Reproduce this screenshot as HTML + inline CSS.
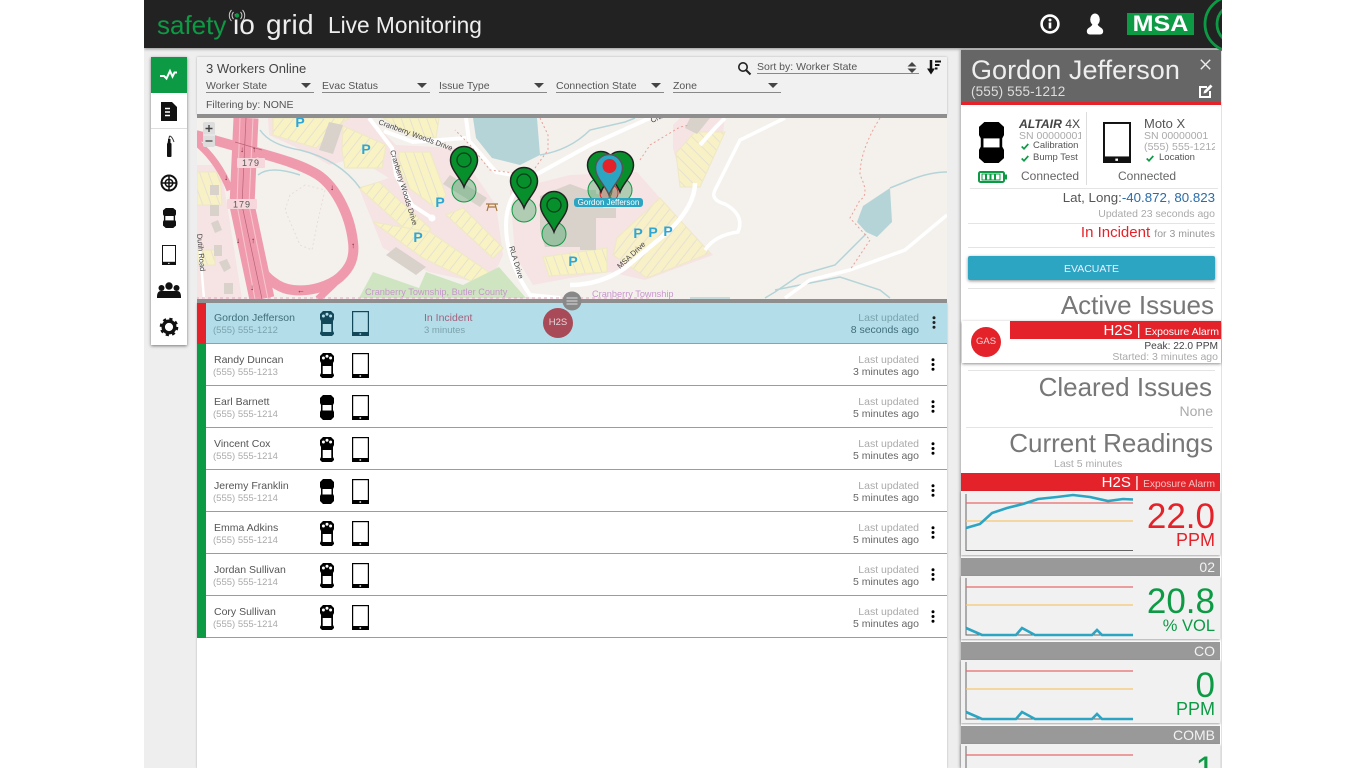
<!DOCTYPE html>
<html><head><meta charset="utf-8"><title>Live Monitoring</title>
<style>
html,body{margin:0;padding:0;width:1366px;height:768px;overflow:hidden;background:#fff;font-family:"Liberation Sans",sans-serif;color:#555}
#app{position:absolute;left:144px;top:0;width:1078px;height:768px;overflow:hidden;background:#eee}
#stage{position:absolute;left:-144px;top:0;width:1366px;height:768px}
.t{position:absolute;white-space:nowrap;line-height:14px;height:14px}
.r{text-align:right}
.b{position:absolute}
svg{position:absolute;overflow:visible}
.row{position:absolute;left:197px;width:750px;height:42px;background:#fff;box-sizing:border-box;border-bottom:1px solid #9c9c9c;--w:#fff;color:#000}
.row .st{position:absolute;left:0;top:0;width:9px;height:42px;background:#0d9a45}
.row .n{left:17px;top:9px;font-size:10.5px;color:#555}
.row .p{left:16px;top:22px;font-size:9.5px;color:#aaa}
.row .l1{right:28px;top:9px;font-size:10.5px;color:#aaa;text-align:right}
.row .l2{right:28px;top:21px;font-size:10.5px;color:#666;text-align:right}
.row .d1{left:123px;top:9px;width:14px;height:25px}
.row .d2{left:155px;top:9px;width:17px;height:25px}
.row .k{left:734px;top:14px;width:4px;height:13px}
.sel{position:absolute;top:79px;width:108px;height:13px;border-bottom:1.5px solid #888;font-size:10.5px;line-height:15px;color:#555}
.sel i{position:absolute;right:3px;top:4px;width:0;height:0;border-left:5px solid transparent;border-right:5px solid transparent;border-top:5px solid #444}
.h{position:absolute;left:961px;width:259px;height:18px;background:#999;color:#f2f2f2;font-size:14px;line-height:18px;text-align:right;box-sizing:border-box;padding-right:5px}
.cb{position:absolute;left:961px;width:259px;height:64px;background:#f1f1f1;box-shadow:0 1px 2px rgba(0,0,0,.35)}
.val{position:absolute;right:5px;text-align:right;white-space:nowrap;font-size:35px;line-height:35px}
.un{position:absolute;right:5px;text-align:right;white-space:nowrap;font-size:18px;line-height:18px}
.hr{position:absolute;height:1px;background:#e4e4e4}
</style></head><body>
<svg width="0" height="0" style="position:absolute">
<defs>
<symbol id="dev1" viewBox="0 0 14 25" preserveAspectRatio="none"><path fill="currentColor" d="M3 0H11L14 3V8L13 10V20L14 22V23L12 25H2L0 23V22L1 20V10L0 8V3Z"/><rect x="2.7" y="13" width="8.6" height="8" style="fill:var(--w)"/><circle cx="3.4" cy="5" r="1.5" style="fill:var(--w)"/><circle cx="7" cy="3.2" r="1.5" style="fill:var(--w)"/><circle cx="10.6" cy="5" r="1.5" style="fill:var(--w)"/></symbol>
<symbol id="dev2" viewBox="0 0 14 25" preserveAspectRatio="none"><path fill="currentColor" d="M3 0H11L14 3V8L13 10V15L14 17V22L11 25H3L0 22V17L1 15V10L0 8V3Z"/><rect x="2.5" y="10" width="9" height="5.5" style="fill:var(--w)"/></symbol>
<symbol id="tab" viewBox="0 0 17 25" preserveAspectRatio="none"><rect x=".6" y=".6" width="15.8" height="23.8" fill="none" stroke="currentColor" stroke-width="1.2"/><rect x="0" y="21" width="17" height="4" fill="currentColor"/><rect x="7.5" y="22.3" width="1.6" height="1.4" style="fill:var(--w)"/></symbol>
<symbol id="dots" viewBox="0 0 4 13"><circle cx="2" cy="1.8" r="1.5" fill="currentColor"/><circle cx="2" cy="6.5" r="1.5" fill="currentColor"/><circle cx="2" cy="11.2" r="1.5" fill="currentColor"/></symbol>
<pattern id="pk1" width="8" height="8" patternUnits="userSpaceOnUse" patternTransform="rotate(38)"><rect width="8" height="8" fill="#f9f3c3"/><rect width="1" height="8" fill="#e5e1d2"/></pattern>
<pattern id="pk2" width="8" height="8" patternUnits="userSpaceOnUse" patternTransform="rotate(-20)"><rect width="8" height="8" fill="#f9f3c3"/><rect width="1" height="8" fill="#e5e1d2"/></pattern>
<pattern id="pk3" width="8" height="8" patternUnits="userSpaceOnUse" patternTransform="rotate(-45)"><rect width="8" height="8" fill="#f9f3c3"/><rect width="1" height="8" fill="#e5e1d2"/></pattern>
<path id="pin" d="M0 0C-3-9-13.5-17-13.5-27A13.5 13.5 0 1 1 13.5-27C13.5-17 3-9 0 0Z"/>
</defs></svg>
<div id="app"><div id="stage">

<!-- top bar -->
<div class="b" style="left:144px;top:0;width:1078px;height:48px;background:#222;box-shadow:0 1px 3px rgba(0,0,0,.4)"></div>
<div class="t" style="left:157px;top:10px;height:30px;line-height:30px;font-size:26px;color:#0d9a45">safety</div>
<div class="t" style="left:233px;top:10px;height:30px;line-height:30px;font-size:28px;color:#eee">io</div>
<svg style="left:229px;top:9px" width="16" height="14"><circle cx="8" cy="6.500" r="2.200" fill="#0d9a45"/><path d="M4.500 3a5 5 0 0 0 0 7M11.500 3a5 5 0 0 1 0 7M2.500 1a8 8 0 0 0 0 11M13.500 1a8 8 0 0 1 0 11" fill="none" stroke="#ccc" stroke-width="1"/></svg>
<div class="t" style="left:266px;top:10px;height:30px;line-height:30px;font-size:28px;color:#eee;letter-spacing:.3px">grid</div>
<div class="t" style="left:328px;top:10px;height:30px;line-height:30px;font-size:22.7px;color:#eee">Live Monitoring</div>
<svg style="left:1040px;top:14px" width="20" height="20"><circle cx="10" cy="10" r="8.400" fill="none" stroke="#fff" stroke-width="2.600"/><rect x="8.700" y="8.500" width="2.600" height="6" fill="#fff"/><circle cx="10" cy="6" r="1.500" fill="#fff"/></svg>
<svg style="left:1086px;top:13px" width="18" height="22"><ellipse cx="9" cy="6.500" rx="4.800" ry="6" fill="#fff"/><path d="M6.500 11C6 14 1 14.500 .8 18Q.8 21.500 4 21.500H14Q17.200 21.500 17.200 18C17 14.500 12 14 11.500 11Z" fill="#fff"/></svg>
<div class="b" style="left:1127px;top:13px;width:67px;height:22px;background:#0d9a45"></div>
<div class="t" style="left:1127px;top:13px;width:67px;height:22px;line-height:22px;font-size:22px;font-weight:bold;color:#fff;text-align:center;transform:scaleX(1.14)">MSA</div>
<svg style="left:1200px;top:0" width="22" height="48"><g fill="none" stroke="#0d9a45" stroke-width="2.800"><circle cx="32.600" cy="24" r="27.600"/><circle cx="37" cy="24" r="20"/></g></svg>

<!-- left nav -->
<div class="b" style="left:151px;top:57px;width:36px;height:288px;background:#fff;box-shadow:0 1px 3px rgba(0,0,0,.5)"></div>
<div class="b" style="left:151px;top:57px;width:36px;height:36px;background:#0d9a45"></div>
<div class="b" style="left:151px;top:128px;width:36px;height:1px;background:#ddd"></div>
<svg style="left:151px;top:57px" width="36" height="288" viewBox="151 57 36 288">
<path d="M160 76H164L166.500 78.500L170 71L172.500 76.500L174.500 72.500H177" fill="none" stroke="#fff" stroke-width="2"/>
<path d="M161 102H172L177 107V121H161Z" fill="#111"/><path d="M165 108.500h5M165 112h5M165 115.500h5" stroke="#fff" stroke-width="1.600"/>
<rect x="167" y="143" width="4.500" height="14" rx="1" fill="#111"/><path d="M168 143L169.500 136M169.500 136Q172 136 174 142" fill="none" stroke="#333" stroke-width="1"/><rect x="168" y="139" width="2.500" height="4" fill="#111"/>
<circle cx="169" cy="183" r="7.500" fill="none" stroke="#111" stroke-width="2"/><circle cx="169" cy="183" r="3.800" fill="none" stroke="#111" stroke-width="1.500"/><path d="M169 175.500V190.500M161.500 183H176.500" stroke="#111" stroke-width="1.500"/>
<use href="#dev2" x="163" y="208" width="13" height="20" style="--w:#fff;color:#111"/>
<g style="--w:#fff;color:#111"><use href="#tab" x="162" y="245" width="14" height="20"/></g>
<g fill="#111"><circle cx="169" cy="286" r="3.700"/><circle cx="161.500" cy="288" r="3"/><circle cx="176.500" cy="288" r="3"/><path d="M157 297Q157 291 161 291H177Q181 291 181 297V298H157Z"/></g>
<circle cx="169" cy="327" r="5.800" fill="none" stroke="#111" stroke-width="3.400"/><circle cx="169" cy="327" r="8" fill="none" stroke="#111" stroke-width="2.600" stroke-dasharray="3.100 3.200"/>
</svg>

<!-- filter panel -->
<div class="b" style="left:197px;top:57px;width:750px;height:58px;background:#f1f1f1;box-shadow:0 0 2px rgba(0,0,0,.25)"></div>
<div class="t" style="left:206px;top:62px;font-size:13px;color:#444">3 Workers Online</div>
<div class="sel" style="left:206px">Worker State<i></i></div>
<div class="sel" style="left:322px">Evac Status<i></i></div>
<div class="sel" style="left:439px">Issue Type<i></i></div>
<div class="sel" style="left:556px">Connection State<i></i></div>
<div class="sel" style="left:673px">Zone<i></i></div>
<div class="t" style="left:206px;top:98px;font-size:10.5px;color:#555;line-height:15px">Filtering by: NONE</div>
<svg style="left:737px;top:61px" width="15" height="15"><circle cx="6" cy="6" r="4.200" fill="none" stroke="#222" stroke-width="1.600"/><path d="M9 9L13.500 13.500" stroke="#222" stroke-width="2"/></svg>
<div class="sel" style="left:757px;top:60px;width:162px;">Sort by: Worker State</div>
<svg style="left:906px;top:62px" width="12" height="11"><path d="M6 0L10.500 4.500H1.500ZM6 11L10.500 6.500H1.500Z" fill="#444"/></svg>
<svg style="left:927px;top:60px" width="14" height="15"><path d="M4 0V9" stroke="#111" stroke-width="2.500"/><path d="M0 8.500H8L4 14.500Z" fill="#111"/><path d="M8 1.500H14M8 5H12.500M8 8.500H10.500" stroke="#111" stroke-width="2"/></svg>

<!-- map -->
<div class="b" style="left:197px;top:114px;width:750px;height:189px;background:#8e8e8e"></div>
<svg style="left:197px;top:118px" width="750" height="181" viewBox="197 118 750 181">
<defs><clipPath id="mc"><rect x="197" y="118" width="750" height="181"/></clipPath></defs>
<g clip-path="url(#mc)">
<rect x="197" y="118" width="750" height="181" fill="#f4f1ed"/>
<g fill="#f6e3e3">
<path d="M196 165L220 165L226 198L242 299H196Z"/>
<path d="M268 118H369L396 145L456 148L496 205L503 255L489 285L429 272L383 248L359 188L389 178L356 158L329 165L313 155L269 135Z"/>
<path d="M510 190L570 175L637 172L660 198L713 255L645 280L610 272L570 278L533 285L515 255Z"/>
<path d="M673 125L723 132L700 187L683 187L673 148ZM680 118H725L723 132L673 125Z"/>
</g>
<g stroke="#efe9c6" stroke-width="1.200">
<path fill="url(#pk1)" d="M273 118H349L343 122L316 148L273 135Z"/>
<path fill="url(#pk1)" d="M343 126L386 145L382 168L345 168L342 150Z"/>
<path fill="url(#pk2)" d="M383 118H439L436 138L410 135Z"/>
<path fill="url(#pk2)" d="M399 152H430L446 195L436 208L409 188L399 168Z"/>
<path fill="url(#pk1)" d="M359 188L379 182L430 228V245L415 238Z"/>
<path fill="url(#pk1)" d="M373 222L430 232L493 275L479 285L423 258Z"/>
<path fill="url(#pk1)" d="M446 215L463 208L503 248L493 258Z"/>
<path fill="url(#pk2)" d="M543 257L607 248V272L549 276Z"/>
<path fill="url(#pk1)" d="M617 238L660 198L710 253L647 278L613 255Z" style="opacity:.85"/>
<path fill="url(#pk3)" d="M676 153L695 132L725 132L700 187H680Z" style="opacity:.9"/>
<path fill="url(#pk2)" d="M197 172H220L222 205H197ZM197 250H215V265H197Z" style="opacity:.9"/>
</g>
<g fill="#cfe5c2"><path d="M359 298L373 272L419 288L426 272L463 285L499 267L526 298Z"/></g>
<g fill="#d9d2cb">
<path d="M319 150L329 122L343 125L333 154Z"/>
<path d="M443 184L450 175L487 198L480 207Z"/>
<path d="M386 255L396 247L426 267L416 275Z"/>
<path d="M540 196L570 184L600 195L606 218H596L596 250H580V247L545 247L540 230Z"/>
<path d="M570 190H596V230H570ZM598 208L616 208V218H598Z"/>
<path d="M690 118H710L697 134L685 128Z"/>
<path d="M210 185h9v10h-9zM210 205h9v11h-9zM211 223l7-3 4 10-7 3zM214 245h8v11h-8zM219 262l8-3 4 9-7 4zM224 283h9v11h-9z"/>
</g>
<g fill="#b5d4d8">
<path d="M473 118H537L540 155L520 165L492 158L476 138Z"/>
<path d="M890 188L863 206L857 222L866 232L877 237L892 222Z"/>
</g>
<g fill="none" stroke="#b5d4d8" stroke-width="1.500">
<path d="M260 130Q270 145 300 150Q340 160 360 188"/>
<path d="M258 175Q270 165 300 175"/>
<path d="M540 155Q570 150 590 130L625 122L635 118"/>
<path d="M890 188L910 180Q930 172 947 172"/>
<path d="M866 234L835 265L800 275L775 292L765 298"/>
<path d="M775 290L840 277L880 290L890 298"/>
<path d="M690 298H730"/>
</g>
<g fill="none" stroke="#fff">
<path d="M369 118L392 148L396 175L412 205L432 218" stroke-width="4"/>
<path d="M384 131L413 142L466 138" stroke-width="4"/>
<path d="M466 118L469 141L496 172L530 178L590 145L650 118" stroke-width="4"/>
<path d="M530 176Q506 195 506 225Q506 260 530 295L560 298" stroke-width="4"/>
<path d="M570 285Q600 285 625 268L670 230Q695 205 695 183" stroke-width="4.500"/>
<path d="M725 118L715 128L700 145" stroke-width="4"/>
<path d="M785 118L740 140L715 190Q710 200 725 204Q745 215 738 232Q715 235 705 250" stroke-width="3.500"/>
<path d="M947 215L905 250L850 270L830 275L810 280L785 298" stroke-width="3.500"/>
<path d="M200 250L204 299" stroke-width="2.500"/>
</g>
<circle cx="432" cy="218" r="3.500" fill="#fff"/>
<g fill="none" stroke="#f09bad" stroke-linecap="butt">
<path d="M246 118L242 205L262 299" stroke-width="25"/>
<path d="M196 135L256 152C285 160 300 165 313 172C335 183 350 215 353 242C355 258 350 268 340 277C330 286 310 292 293 290C280 289 262 278 256 258" stroke-width="10"/>
<path d="M196 142Q218 160 230 190" stroke-width="7"/>
<path d="M318 299L335 283" stroke-width="7"/>
</g>
<g fill="none" stroke="#f7c6cf" stroke-width="1"><path d="M240 118L237 205L255 299M253 118L249 205L268 299"/></g>
<g fill="none" stroke="#b8637a" stroke-width=".7"><path d="M246 118L242 205L262 299"/><path d="M235 142L262 150"/></g>
<path d="M196 298H650" stroke="#e4a6c4" stroke-width="1" stroke-dasharray="3 3" fill="none"/>
<g fill="none" stroke="#e9a096" stroke-width="1" stroke-dasharray="2 2.500">
<path d="M540 118L548 135L548 150L530 175L490 170L470 145L455 130"/>
<path d="M640 160L650 145L680 127L690 125"/>
<path d="M880 118Q860 150 860 175Q870 195 860 200L850 218L870 240L850 270"/>
</g>
<path d="M305 185L290 195L285 210L300 245L312 250L318 220L325 190Z" fill="none" stroke="#e6ddd5" stroke-width="1" stroke-dasharray="2 2.500"/>
<g fill="#7a2438" font-size="8" font-family="Liberation Sans"><text x="240" y="152">↓</text><text x="252" y="152">↑</text><text x="224" y="180">↓</text><text x="236" y="243">↓</text><text x="251" y="243">↑</text><text x="351" y="248">↑</text><text x="330" y="190">↓</text><text x="250" y="290">↓</text><text x="297" y="293">←</text></g>
<g font-family="Liberation Sans"><rect x="237" y="158" width="28" height="10" rx="1" fill="#f6d7db"/><text x="251" y="166" font-size="9" fill="#555" text-anchor="middle" letter-spacing="1">179</text><rect x="227" y="199" width="30" height="10" rx="1" fill="#f6d7db"/><text x="242" y="207.500" font-size="9" fill="#555" text-anchor="middle" letter-spacing="1">179</text></g>
<g font-size="7.500" fill="#444" font-family="Liberation Sans">
<text transform="translate(378 124) rotate(20)">Cranberry Woods Drive</text>
<text transform="translate(390 151) rotate(73)">Cranberry Woods Drive</text>
<text transform="translate(509 247) rotate(73)">RLA Drive</text>
<text transform="translate(620 269) rotate(-43)">MSA Drive</text>
<text transform="translate(652 123) rotate(-25)">Cra</text>
<text transform="translate(197 234) rotate(85)">Dutih Road</text>
</g>
<g fill="#2ea6d6" font-size="14" font-weight="bold" font-family="Liberation Sans" text-anchor="middle">
<text x="300" y="127">P</text><text x="366" y="154">P</text><text x="440" y="207">P</text><text x="418" y="242">P</text><text x="573" y="266">P</text><text x="638" y="238">P</text><text x="653" y="237">P</text><text x="668" y="236">P</text>
</g>
<path d="M486 204H498M488 207H496M489 204L487 211M495 204L497 211" stroke="#a9793c" stroke-width="1.200" fill="none"/>
<g font-size="9.2" fill="#c796cc" font-family="Liberation Sans"><text x="365" y="295">Cranberry Township, Butler County</text><text x="592" y="297">Cranberry Township</text></g>

<g fill="#0d9a45" fill-opacity=".3" stroke="#0d9a45" stroke-width="1">
<circle cx="464" cy="190" r="12"/><circle cx="524" cy="210" r="12"/><circle cx="554" cy="234" r="12"/><circle cx="600" cy="190" r="12"/><circle cx="620" cy="190" r="12"/>
</g>
<circle cx="609" cy="193" r="9" fill="#e4222a" fill-opacity=".25" stroke="#e4222a"/>
<g fill="#078f2c" stroke="#222" stroke-width="1.500">
<use href="#pin" x="464" y="187"/><use href="#pin" x="524" y="208"/><use href="#pin" x="554" y="232"/><use href="#pin" x="601" y="192"/><use href="#pin" x="620" y="192"/>
</g>
<g fill="none" stroke="#063f1c" stroke-width="1.300"><circle cx="464" cy="160" r="7"/><circle cx="524" cy="181" r="7"/><circle cx="554" cy="205" r="7"/></g>
<use href="#pin" x="609" y="195" fill="#2ca5c3" stroke="#555" stroke-width="1.500"/>
<circle cx="609.500" cy="166" r="7" fill="#e4222a"/>
<rect x="574" y="198" width="69" height="9" rx="3" fill="#2ca5c3"/>
<text x="608.500" y="205" font-size="8" fill="#fff" text-anchor="middle" font-family="Liberation Sans">Gordon Jefferson</text>
<rect x="203" y="122" width="12" height="25" rx="2" fill="#ddd"/>
<path d="M205.500 128.500H212.500M209 125V132" stroke="#444" stroke-width="1.400"/><path d="M205.500 141H212.500" stroke="#555" stroke-width="1.400"/><path d="M203 135H215" stroke="#eee" stroke-width="1"/>
</g>
</svg>

<!-- list bg -->
<div class="b" style="left:197px;top:303px;width:750px;height:465px;background:#fff;box-shadow:0 0 2px rgba(0,0,0,.25)"></div>

<div class="row" style="top:302px;background:#b3dde8;--w:#b3dde8;color:#12485a"><div class="st" style="background:#e4222a"></div>
<div class="t n" style="color:#3f6d7a">Gordon Jefferson</div><div class="t p" style="color:#7ba3ae">(555) 555-1212</div>
<svg class="d1"><use href="#dev1" width="14" height="25"/></svg><svg class="d2"><use href="#tab" width="17" height="25"/></svg>
<div class="t" style="left:227px;top:9px;font-size:10.5px;color:#a5607c">In Incident</div><div class="t" style="left:227px;top:22px;font-size:9.5px;color:#7ba3ae">3 minutes</div>
<div class="b" style="left:346px;top:6px;width:30px;height:30px;border-radius:50%;background:#a84a58;color:#e5d8da;font-size:9.5px;line-height:30px;text-align:center">H2S</div>
<div class="t l1" style="color:#7ba3ae">Last updated</div><div class="t l2" style="color:#3f6d7a">8 seconds ago</div><svg class="k" style="left:735px;color:#222"><use href="#dots" width="4" height="13"/></svg></div>

<div class="row" style="top:344px"><div class="st"></div><div class="t n">Randy Duncan</div><div class="t p">(555) 555-1213</div><svg class="d1"><use href="#dev1" width="14" height="25"/></svg><svg class="d2"><use href="#tab" width="17" height="25"/></svg><div class="t l1">Last updated</div><div class="t l2">3 minutes ago</div><svg class="k"><use href="#dots" width="4" height="13"/></svg></div>
<div class="row" style="top:386px"><div class="st"></div><div class="t n">Earl Barnett</div><div class="t p">(555) 555-1214</div><svg class="d1"><use href="#dev2" width="14" height="25"/></svg><svg class="d2"><use href="#tab" width="17" height="25"/></svg><div class="t l1">Last updated</div><div class="t l2">5 minutes ago</div><svg class="k"><use href="#dots" width="4" height="13"/></svg></div>
<div class="row" style="top:428px"><div class="st"></div><div class="t n">Vincent Cox</div><div class="t p">(555) 555-1214</div><svg class="d1"><use href="#dev1" width="14" height="25"/></svg><svg class="d2"><use href="#tab" width="17" height="25"/></svg><div class="t l1">Last updated</div><div class="t l2">5 minutes ago</div><svg class="k"><use href="#dots" width="4" height="13"/></svg></div>
<div class="row" style="top:470px"><div class="st"></div><div class="t n">Jeremy Franklin</div><div class="t p">(555) 555-1214</div><svg class="d1"><use href="#dev2" width="14" height="25"/></svg><svg class="d2"><use href="#tab" width="17" height="25"/></svg><div class="t l1">Last updated</div><div class="t l2">5 minutes ago</div><svg class="k"><use href="#dots" width="4" height="13"/></svg></div>
<div class="row" style="top:512px"><div class="st"></div><div class="t n">Emma Adkins</div><div class="t p">(555) 555-1214</div><svg class="d1"><use href="#dev1" width="14" height="25"/></svg><svg class="d2"><use href="#tab" width="17" height="25"/></svg><div class="t l1">Last updated</div><div class="t l2">5 minutes ago</div><svg class="k"><use href="#dots" width="4" height="13"/></svg></div>
<div class="row" style="top:554px"><div class="st"></div><div class="t n">Jordan Sullivan</div><div class="t p">(555) 555-1214</div><svg class="d1"><use href="#dev1" width="14" height="25"/></svg><svg class="d2"><use href="#tab" width="17" height="25"/></svg><div class="t l1">Last updated</div><div class="t l2">5 minutes ago</div><svg class="k"><use href="#dots" width="4" height="13"/></svg></div>
<div class="row" style="top:596px"><div class="st"></div><div class="t n">Cory Sullivan</div><div class="t p">(555) 555-1214</div><svg class="d1"><use href="#dev1" width="14" height="25"/></svg><svg class="d2"><use href="#tab" width="17" height="25"/></svg><div class="t l1">Last updated</div><div class="t l2">5 minutes ago</div><svg class="k"><use href="#dots" width="4" height="13"/></svg></div>

<!-- gray band + handle over rows -->
<div class="b" style="left:197px;top:299px;width:750px;height:4px;background:#8e8e8e"></div>
<svg style="left:562px;top:291px" width="20" height="20"><circle cx="10" cy="10" r="9.500" fill="#888"/><path d="M4.500 7H15.500M4.500 10H15.500M4.500 13H15.500" stroke="#ddd" stroke-width="1"/></svg>

<!-- right panel -->
<div class="b" style="left:961px;top:50px;width:260px;height:718px;background:#fff;box-shadow:-1px 0 3px rgba(0,0,0,.3)"></div>
<div class="b" style="left:961px;top:50px;width:260px;height:52px;background:#666"></div>
<div class="b" style="left:961px;top:102px;width:260px;height:3px;background:#e4222a"></div>
<div class="t" style="left:971px;top:53px;height:34px;line-height:34px;font-size:27px;color:#eee;letter-spacing:.05px">Gordon Jefferson</div>
<div class="t" style="left:971px;top:85px;font-size:13.5px;color:#ddd;letter-spacing:.15px">(555) 555-1212</div>
<svg style="left:1200px;top:59px" width="11" height="11"><path d="M.8.800L10.200 10.200M10.200.800L.8 10.200" stroke="#eee" stroke-width="1.400"/></svg>
<svg style="left:1198px;top:83px" width="16" height="16"><path d="M9 4H2V14H12V8" fill="none" stroke="#fff" stroke-width="2"/><path d="M5.500 10.500L6 8L12.500 1.500L14.500 3.500L8 10Z" fill="#fff"/></svg>

<svg style="left:979px;top:122px;--w:#fff;color:#000" width="25" height="41"><use href="#dev2" width="25" height="41"/></svg>
<svg style="left:978px;top:171px" width="29" height="12"><rect x="1" y="1" width="25" height="10" rx="1.500" fill="#fff" stroke="#0d9a45" stroke-width="2"/><rect x="27" y="3.500" width="2" height="5" fill="#0d9a45"/><path d="M4 3v6h3.500V3zM8.500 3v6H12V3zM13 3v6h3.500V3zM17.500 3v6H22V3z" fill="#fff" stroke="#0d9a45" stroke-width="1"/></svg>
<div class="t" style="left:1019px;top:117px;font-size:12.2px;color:#444"><b><i>ALTAIR</i></b> 4X</div>
<div class="b" style="left:1019px;top:129px;width:62px;height:14px;overflow:hidden"><div class="t" style="left:0;top:0;font-size:10.5px;color:#aaa">SN 00000001</div></div>
<svg style="left:1021px;top:143px" width="8" height="7"><path d="M.7 3.500L3 5.800L7.300 1" fill="none" stroke="#0d9a45" stroke-width="1.700"/></svg>
<div class="t" style="left:1033px;top:139px;font-size:9.5px;color:#555">Calibration</div>
<svg style="left:1021px;top:155px" width="8" height="7"><path d="M.7 3.500L3 5.800L7.300 1" fill="none" stroke="#0d9a45" stroke-width="1.700"/></svg>
<div class="t" style="left:1033px;top:151px;font-size:9.5px;color:#555">Bump Test</div>
<div class="t" style="left:1021px;top:169px;font-size:12px;color:#666">Connected</div>
<div class="b" style="left:1086px;top:112px;width:1px;height:73px;background:#ddd"></div>
<svg style="left:1103px;top:122px;--w:#fff;color:#111" width="28" height="41"><use href="#tab" width="28" height="41"/></svg>
<div class="t" style="left:1144px;top:117px;font-size:13px;color:#555">Moto X</div>
<div class="t" style="left:1144px;top:129px;font-size:10.5px;color:#aaa">SN 00000001</div>
<div class="b" style="left:1144px;top:140px;width:71px;height:14px;overflow:hidden"><div class="t" style="left:0;top:0;font-size:10.5px;color:#aaa;letter-spacing:.1px">(555) 555-1212</div></div>
<svg style="left:1146px;top:155px" width="8" height="7"><path d="M.7 3.500L3 5.800L7.300 1" fill="none" stroke="#0d9a45" stroke-width="1.700"/></svg>
<div class="t" style="left:1159px;top:151px;font-size:9.5px;color:#555">Location</div>
<div class="t" style="left:1118px;top:169px;font-size:12px;color:#666">Connected</div>
<div class="hr" style="left:970px;top:188px;width:248px"></div>
<div class="t r" style="right:151px;top:191px;font-size:13.3px;color:#555">Lat, Long:<span style="color:#2b6ca8">-40.872, 80.823</span></div>
<div class="t r" style="right:151px;top:207px;font-size:10.5px;color:#aaa">Updated 23 seconds ago</div>
<div class="hr" style="left:968px;top:223px;width:247px"></div>
<div class="t r" style="right:151px;top:226px;font-size:15px;color:#e4222a">In Incident <span style="font-size:10.5px;color:#999">for 3 minutes</span></div>
<div class="hr" style="left:968px;top:247px;width:247px"></div>
<div class="b" style="left:968px;top:256px;width:247px;height:24px;background:#2ca5c3;border-radius:2px;box-shadow:0 1px 3px rgba(0,0,0,.45);color:#eef;font-size:10.5px;line-height:26px;text-align:center">EVACUATE</div>
<div class="hr" style="left:968px;top:288px;width:247px"></div>
<div class="t r" style="right:152px;top:288px;height:34px;line-height:34px;font-size:26px;color:#777">Active Issues</div>
<div class="b" style="left:962px;top:321px;width:259px;height:42px;background:#fff;box-shadow:0 1px 3px rgba(0,0,0,.45)"></div>
<div class="b" style="left:1010px;top:321px;width:211px;height:18px;background:#e4222a;color:#fff;font-size:15px;line-height:19px;text-align:right;box-sizing:border-box;padding-right:2px;white-space:nowrap">H2S | <span style="font-size:10.5px">Exposure Alarm</span></div>
<div class="b" style="left:971px;top:327px;width:30px;height:30px;border-radius:50%;background:#e4222a;color:#f5d5d5;font-size:9.5px;line-height:30px;text-align:center">GAS</div>
<div class="t r" style="right:148px;top:340px;font-size:10.2px;color:#444">Peak: 22.0 PPM</div>
<div class="t r" style="right:148px;top:350px;font-size:10.5px;color:#aaa">Started: 3 minutes ago</div>
<div class="hr" style="left:968px;top:370px;width:247px"></div>
<div class="t r" style="right:154px;top:370px;height:34px;line-height:34px;font-size:26px;color:#777">Cleared Issues</div>
<div class="t r" style="right:153px;top:404px;font-size:14px;color:#aaa">None</div>
<div class="hr" style="left:966px;top:427px;width:247px"></div>
<div class="t r" style="right:153px;top:426px;height:34px;line-height:34px;font-size:26px;color:#777">Current Readings</div>
<div class="t" style="left:1054px;top:457px;font-size:10.5px;color:#aaa">Last 5 minutes</div>

<!-- H2S card -->
<div class="h" style="top:473px;background:#e4222a;color:#fff;font-size:15px;line-height:20px;white-space:nowrap">H2S | <span style="font-size:10.2px;color:#f5c0c0">Exposure Alarm</span></div>
<div class="cb" style="top:491px"><svg style="left:0;top:0" width="180" height="64" viewBox="961 491 180 64"><path d="M966 494V550.500H1133" fill="none" stroke="#666" stroke-width="1"/><path d="M966 503H1133" stroke="#e86a6a" stroke-width="1.300"/><path d="M966 521H1133" stroke="#f5c56f" stroke-width="1.300"/><path d="M966 528L980 524L992 513L1007 508L1023 504L1038 499L1057 497L1073 495L1090 497L1108 501L1123 499L1133 499.500" fill="none" stroke="#2ca5c3" stroke-width="2.600"/></svg>
<div class="val" style="top:8px;color:#e4222a">22.0</div><div class="un" style="top:40px;color:#e4222a">PPM</div></div>

<!-- O2 -->
<div class="h" style="top:558px">02</div>
<div class="cb" style="top:576px;height:63px"><svg style="left:0;top:0" width="180" height="63" viewBox="961 576 180 63"><path d="M966 578V635H1133" fill="none" stroke="#666" stroke-width="1"/><path d="M966 587H1133" stroke="#e86a6a" stroke-width="1.300"/><path d="M966 605H1133" stroke="#f5c56f" stroke-width="1.300"/><path d="M966 628L982 635H1016L1022 628L1035 635H1092L1097 630L1102 635H1133" fill="none" stroke="#2ca5c3" stroke-width="2.600"/></svg>
<div class="val" style="top:8px;color:#0d9a45">20.8</div><div class="un" style="top:41px;font-size:16.5px;color:#0d9a45">% VOL</div></div>

<!-- CO -->
<div class="h" style="top:642px">CO</div>
<div class="cb" style="top:660px;height:63px"><svg style="left:0;top:0" width="180" height="63" viewBox="961 660 180 63"><path d="M966 662V719H1133" fill="none" stroke="#666" stroke-width="1"/><path d="M966 671H1133" stroke="#e86a6a" stroke-width="1.300"/><path d="M966 689H1133" stroke="#f5c56f" stroke-width="1.300"/><path d="M966 712L982 719H1016L1022 712L1035 719H1092L1097 714L1102 719H1133" fill="none" stroke="#2ca5c3" stroke-width="2.600"/></svg>
<div class="val" style="top:8px;color:#0d9a45">0</div><div class="un" style="top:40px;color:#0d9a45">PPM</div></div>

<!-- COMB -->
<div class="h" style="top:726px">COMB</div>
<div class="cb" style="top:744px;height:30px"><svg style="left:0;top:0" width="180" height="30" viewBox="961 744 180 30"><path d="M966 746V774" fill="none" stroke="#666" stroke-width="1"/><path d="M966 755H1133" stroke="#e86a6a" stroke-width="1.300"/></svg>
<div class="val" style="top:8px;color:#0d9a45">1</div></div>

</div></div>
</body></html>
